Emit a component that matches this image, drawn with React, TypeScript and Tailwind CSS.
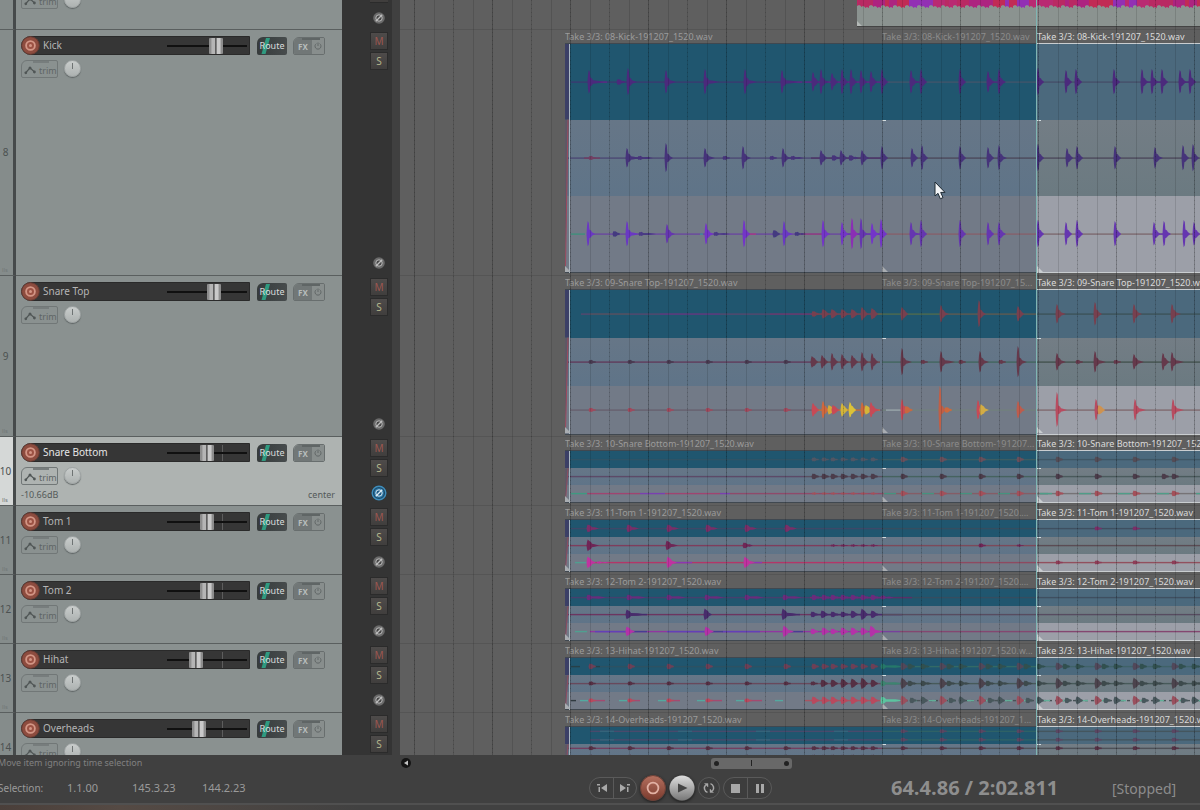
import React from "react";
import clsx from "clsx";

type Hit = [x: number, height: number, tail: number, color?: string];
type Line = [from: number, to: number, color: string];

interface Lane {
  color: string;
  hits: Hit[];
  lines: Line[];
  stereo?: boolean;
}

interface Track {
  id: number;
  name: string;
  laneHeight: number;
  volume: number;
  zeroTick?: boolean;
  selected?: boolean;
  rowClass: string;
  file: string;
  shortFile: string;
  lanes: Lane[];
}

const CLIP_STARTS = [565, 882, 1037];
const BEATS = [590, 629, 668, 707, 746, 785];
const ROLL = [813, 823, 832, 842, 852, 862, 872];
const MID = [902, 941, 980, 1018];
const END = [1057, 1096, 1134, 1173];

const same = (xs: number[], h: number, tail: number, color?: string): Hit[] =>
  xs.map((x) => [x, h, tail, color]);

const dashes = (from: number, to: number, step: number, len: number, color: string): Line[] => {
  const out: Line[] = [];
  for (let x = from; x < to; x += step) out.push([x, x + len, color]);
  return out;
};

const kickLanes: Lane[] = [
  {
    color: "#4b2a7c",
    lines: [[571, 882, "#3a3a70"], [589, 607, "#5c2c86"], [782, 802, "#5c2c86"], [805, 890, "#5c2c86"], [882, 1037, "#41556b"], [1037, 1200, "#46506a"], [911, 925, "#4b2a7c"], [988, 1001, "#4b2a7c"], [1142, 1164, "#4b2a7c"], [1180, 1192, "#4b2a7c"]],
    hits: [
      [589, 12, 14], [618, 3, 8], [628, 14, 9], [666, 12, 10], [705, 13, 14], [745, 13, 12], [782, 12, 16],
      [813, 10, 5], [821, 13, 8], [832, 9, 6], [842, 13, 6], [851, 13, 6], [861, 12, 6], [871, 11, 6], [882, 13, 6],
      [911, 12, 8], [921, 13, 5], [960, 13, 6], [988, 11, 5], [999, 13, 7], [1038, 14, 5], [1066, 12, 6], [1076, 13, 5],
      [1114, 13, 5], [1142, 13, 6], [1152, 13, 6], [1162, 13, 6], [1180, 12, 6], [1190, 13, 6],
    ],
  },
  {
    color: "#46347a",
    lines: [[565, 882, "#4c4a74"], [584, 600, "#733f62"], [629, 650, "#46347a"], [783, 800, "#46347a"], [811, 882, "#4e3566"], [882, 1200, "#4d4a5c"]],
    hits: [
      [590, 2, 6, "#733f62"], [627, 10, 12], [639, 2, 14], [666, 15, 7], [705, 10, 10], [724, 2, 6], [743, 12, 8], [771, 2, 5],
      [783, 10, 7], [792, 2, 12], [821, 8, 6], [833, 3, 5], [841, 8, 5], [850, 3, 9], [862, 8, 7], [882, 12, 5],
      [912, 10, 5], [922, 13, 6], [960, 12, 6], [988, 11, 5], [999, 13, 8], [1038, 14, 5], [1067, 10, 5], [1077, 12, 5],
      [1115, 12, 6], [1155, 11, 8], [1183, 13, 5], [1193, 14, 6],
    ],
  },
  {
    color: "#6536b0",
    lines: [[571, 585, "#3f8f7c"], [587, 882, "#6a48a0"], [640, 648, "#3f3a72"], [700, 703, "#3f8f9c"], [745, 756, "#a83a86"], [800, 824, "#93407c"], [840, 882, "#6536b0"], [882, 1037, "#86606c"], [1037, 1200, "#7d6a70"], [911, 925, "#6536b0"], [1154, 1166, "#6536b0"]],
    hits: [
      [588, 13, 7, "#6a38c4"], [614, 3, 6, "#443a80"], [627, 13, 12, "#6a38c4"], [640, 2, 16, "#4a3a86"], [667, 10, 8], [706, 11, 8, "#7335c8"],
      [715, 2, 15, "#4a3a86"], [744, 14, 6, "#7335c8"], [774, 4, 3, "#443a80"], [784, 13, 9, "#6a38c4"], [796, 2, 10, "#443a80"], [823, 14, 7, "#7335c8"], [842, 12, 5, "#7335c8"],
      [852, 16, 6, "#8a2fb4"], [861, 16, 6], [872, 11, 7, "#7335c8"], [881, 15, 4, "#7335c8"], [911, 12, 8], [921, 14, 5],
      [960, 14, 6], [988, 12, 5], [999, 12, 7], [1038, 14, 5], [1066, 12, 6], [1077, 14, 6], [1115, 13, 5],
      [1154, 12, 6], [1164, 13, 7], [1184, 14, 6], [1194, 12, 6],
    ],
  },
];

const snareTopLanes: Lane[] = [
  {
    color: "#77404f",
    lines: [[581, 882, "#56486e"], [590, 630, "#4d5560"], [660, 720, "#573c80"], [770, 815, "#643c70"], [813, 882, "#6a4a52"], [872, 940, "#4f6a4e"], [940, 1037, "#5f5a50"], [1037, 1200, "#3d545a"]],
    hits: [[813, 3, 5], [823, 5, 5], [832, 5, 5], [842, 5, 5], [852, 5, 5], [862, 7, 4], [872, 6, 5], [902, 7, 6], [941, 9, 8], [979, 14, 7], [1018, 8, 5], [1057, 10, 9], [1095, 12, 7], [1134, 10, 8], [1172, 10, 9]],
  },
  {
    color: "#65394b",
    lines: [[565, 813, "#603c5c"], [813, 880, "#6b4648"], [882, 1037, "#43665f"], [1037, 1200, "#44534f"]],
    hits: [...same(BEATS, 2, 5, "#483a50"), [812, 6, 5], [822, 7, 6], [832, 9, 5], [842, 8, 7], [852, 7, 3], [862, 10, 4], [872, 9, 5], [902, 14, 10], [922, 2, 3], [941, 11, 14], [960, 2, 6], [980, 11, 9], [1000, 2, 4], [1018, 16, 9], [1057, 9, 9], [1077, 2, 5], [1095, 11, 11], [1115, 2, 6], [1134, 8, 10], [1163, 9, 5], [1172, 10, 12]],
  },
  {
    color: "#c74a56",
    lines: [[569, 882, "#68606f"], [813, 880, "#c9743f"], [882, 1037, "#72807e"], [886, 902, "#9aa5ac"], [1037, 1200, "#806b70"]],
    hits: [
      ...same(BEATS, 2, 5, "#a0495c"), [813, 7, 5], [823, 9, 5, "#d0683e"], [829, 5, 4, "#d3a83a"], [833, 5, 4], [842, 7, 4, "#d3b53a"], [850, 8, 4, "#dcc238"],
      [862, 8, 3, "#cc6a3e"], [866, 5, 5, "#d3b53a"], [871, 8, 9], [902, 11, 5], [906, 4, 7, "#c96840"], [940, 24, 7, "#c15f46"], [946, 3, 6, "#cc6a3e"], [978, 10, 4],
      [981, 6, 8, "#d3ac45"], [1018, 9, 7, "#bd5c4d"], [1057, 18, 10, "#b84c60"], [1096, 11, 3, "#b84c60"], [1099, 5, 6, "#ce9250"], [1135, 11, 11, "#b84c60"], [1173, 11, 11, "#b84c60"],
    ],
  },
];

const snareBottomLanes: Lane[] = [
  { color: "#5b5260", lines: [[571, 882, "#2f5366"], [882, 1037, "#3c5c62"], [1037, 1200, "#3f5766"]], hits: [...same(ROLL, 2, 4, "#505664"), ...same(MID, 3, 5, "#68505c"), ...same(END, 3, 5, "#534c56")] },
  { color: "#4b3c4a", lines: [[565, 805, "#5c4a68"], [805, 882, "#5a5060"], [882, 1037, "#46635f"], [1037, 1200, "#4a5a5c"]], hits: [...same(ROLL, 3, 4), ...same(MID, 3, 5), ...same([...END, 1163], 3, 5)] },
  {
    color: "#a3505a",
    lines: [[571, 587, "#3e9a80"], [587, 640, "#a04470"], [640, 665, "#7a40b0"], [665, 720, "#a04470"], [720, 730, "#7a40b0"], [730, 882, "#8f4a6a"], [882, 1037, "#855d66"], ...dashes(884, 1037, 38, 12, "#45937f"), [1037, 1200, "#767376"], ...dashes(1040, 1200, 39, 12, "#4f9d88")],
    hits: [...same(ROLL, 1, 3), ...same(MID, 3, 6), ...same(END, 3, 7)],
  },
];

const tomOneLanes: Lane[] = [
  { color: "#7a2f68", lines: [[571, 882, "#3d4868"], [882, 1037, "#354d60"], [1037, 1200, "#3f4f60"]], hits: [...same([588, 628, 668, 707, 746, 786], 4, 11), [1096, 2, 4], [1134, 2, 4]] },
  { color: "#6f2656", lines: [[565, 882, "#7e3d5c"], [882, 1037, "#7c4a5a"], [1037, 1200, "#5b4c54"]], hits: [[588, 6, 11], [667, 5, 11], [744, 3, 9], ...same([832, 842, 852, 862, 872], 1, 3), [980, 2, 4], [1018, 1, 4]] },
  { color: "#c033a0", lines: [[575, 587, "#4f9f90"], [587, 882, "#b33668"], [672, 692, "#8a38b4"], [750, 762, "#8a38b4"], [882, 1037, "#8e4a60"], [1037, 1200, "#92505e"]], hits: [[588, 6, 8], [598, 1, 12], [668, 6, 9], [745, 6, 10], ...same(END, 2, 5, "#8e3e58")] },
];

const tomTwoLanes: Lane[] = [
  { color: "#6a2c7c", lines: [[571, 882, "#45406e"], [810, 882, "#742a70"], [882, 1037, "#354d60"], [882, 912, "#5a3068"], [1037, 1200, "#3f4f60"]], hits: [...same([588, 628, 668, 706, 746, 784], 3, 18), ...same(ROLL, 3, 8), [882, 2, 12]] },
  { color: "#482c6c", lines: [[565, 882, "#6c3560"], [628, 647, "#482c6c"], [783, 800, "#482c6c"], [811, 902, "#482c6c"], [882, 1200, "#574c60"]], hits: [[627, 5, 18], [705, 6, 7], [783, 6, 16], [812, 3, 4], [822, 4, 6], [832, 3, 7], [842, 3, 7], [852, 4, 5], [862, 6, 5], [872, 4, 7]] },
  { color: "#b432a8", lines: [[575, 587, "#4f9f90"], [590, 882, "#9036a0"], [595, 627, "#6240b8"], [667, 705, "#6240b8"], [722, 760, "#6240b8"], [632, 647, "#483c94"], [711, 723, "#483c94"], [787, 803, "#483c94"], [882, 900, "#77419c"], [900, 1200, "#844770"]], hits: [[627, 5, 8], [706, 5, 8], [784, 6, 10], [812, 3, 4], [823, 4, 5], [832, 3, 5], [842, 4, 5], [852, 4, 6], [862, 4, 5], [871, 6, 11]] },
];

const hatBase = [...MID, ...END];
const hatOff = [922, 960, 999, 1038, 1077, 1115, 1154, 1193];

const hihatLanes: Lane[] = [
  { color: "#6d4056", lines: [[571, 580, "#284048"], [590, 600, "#284048"], [600, 882, "#2d5162"], [882, 1037, "#336a66"], [1037, 1200, "#3f6268"]], hits: [...same(BEATS, 3, 4), ...same(ROLL, 3, 5), [882, 3, 22, "#25786a"], ...same(hatBase, 4, 6, "#51485a"), ...same(hatBase.map((x) => x + 7), 3, 6, "#31504f"), ...same(hatOff, 3, 8, "#31504f")] },
  { color: "#553044", lines: [[565, 882, "#68495c"], [882, 1200, "#475a5a"]], hits: [...same(BEATS, 2, 4), [812, 2, 5], [822, 4, 6], [832, 4, 6], [842, 5, 5], [852, 5, 6], [862, 6, 5], [872, 4, 5], [882, 3, 22, "#3d8470"], ...same(hatBase, 6, 8, "#4c434d"), ...same(hatBase.map((x) => x + 7), 3, 8, "#3d4a4c"), ...same(hatOff, 3, 10, "#3d4a4c")] },
  { color: "#b8495e", lines: [[571, 576, "#303a40"], ...dashes(580, 790, 39, 8, "#54a9a0"), [590, 605, "#a34a70"], [630, 640, "#a34a70"], [668, 680, "#a34a70"], [707, 722, "#a34a70"], [746, 762, "#a34a70"], [805, 882, "#a85460"], ...dashes(905, 1200, 6, 3, "#485357"), ...dashes(910, 1200, 19, 7, "#62ae98")], hits: [...same([590, 629, 668, 707, 746], 2, 6), ...same(ROLL, 4, 6), [882, 4, 22, "#5cc4a0"], ...same(hatBase, 5, 5, "#99505e"), ...same(hatBase.map((x) => x + 9), 3, 6, "#48575c"), ...same(hatOff, 4, 5, "#48575c")] },
];

const overheadLanes: Lane[] = [
  { color: "#5b4662", stereo: true, lines: [[590, 882, "#4a4a6c"], ...dashes(600, 880, 78, 14, "#35647a"), [882, 1037, "#2f6266"], [1037, 1200, "#44565e"]], hits: [...same([...MID, ...END], 2, 5)] },
  { color: "#553044", stereo: true, lines: [[565, 882, "#723f60"], [882, 1200, "#4d5158"]], hits: [...same([...BEATS, ...ROLL, ...MID, ...END], 2, 5)] },
  { color: "#553044", stereo: true, lines: [[565, 1200, "#723f60"]], hits: [] },
];

const TRACKS: Track[] = [
  { id: 8, name: "Kick", laneHeight: 76, volume: 64, rowClass: "h-[246px]", file: "08-Kick-191207_1520.wav", shortFile: "08-Kick-191207_1520.wav", lanes: kickLanes },
  { id: 9, name: "Snare Top", laneHeight: 48, volume: 61, rowClass: "h-[161px]", file: "09-Snare Top-191207_1520.wav", shortFile: "09-Snare Top-191207_15...", lanes: snareTopLanes },
  { id: 10, name: "Snare Bottom", laneHeight: 17, volume: 50, zeroTick: true, selected: true, rowClass: "h-[69px]", file: "10-Snare Bottom-191207_1520.wav", shortFile: "10-Snare Bottom-191207...", lanes: snareBottomLanes },
  { id: 11, name: "Tom 1", laneHeight: 17, volume: 50, zeroTick: true, rowClass: "h-[69px]", file: "11-Tom 1-191207_1520.wav", shortFile: "11-Tom 1-191207_1520....", lanes: tomOneLanes },
  { id: 12, name: "Tom 2", laneHeight: 17, volume: 50, zeroTick: true, rowClass: "h-[69px]", file: "12-Tom 2-191207_1520.wav", shortFile: "12-Tom 2-191207_1520....", lanes: tomTwoLanes },
  { id: 13, name: "Hihat", laneHeight: 17, volume: 33, zeroTick: true, rowClass: "h-[69px]", file: "13-Hihat-191207_1520.wav", shortFile: "13-Hihat-191207_1520.w...", lanes: hihatLanes },
  { id: 14, name: "Overheads", laneHeight: 17, volume: 38, zeroTick: true, rowClass: "h-[69px]", file: "14-Overheads-191207_1520.wav", shortFile: "14-Overheads-191207_1...", lanes: overheadLanes },
];

// sharp attack, then a short body that decays along the tail
function hitPath([x, h, tail]: Hit) {
  const body = h > 6 ? 3.5 : h * 0.6;
  const top = [
    [x - 1.5, 0], [x - 1, h * 0.6], [x - 0.3, h], [x + 0.8, h * 0.85], [x + 1.4, body + 1],
    [x + 3, body], [x + 4, body * 0.5], [x + Math.max(5, tail * 0.6), h > 2 ? 1.3 : h * 0.5], [x + Math.max(6, tail), 0],
  ];
  const bottom = [...top].reverse().map(([px, py]) => [px, -py * 0.95]);
  return "M" + [...top, ...bottom].map(([px, py]) => `${px} ${-py}`).join("L") + "Z";
}

function Wave({ lane, start }: { lane: Lane; start: number }) {
  const rows = lane.stereo ? [25, 75] : [50];
  return (
    <svg className="block h-full w-full" aria-hidden="true">
      {rows.map((row) => (
        <svg key={row} y={`${row}%`} className="overflow-visible">
          <g transform={`translate(${-start} 0)`}>
            {lane.lines.map(([from, to, color], i) => (
              <rect key={i} x={from} y={-0.6} width={to - from} height={1.4} fill={color} />
            ))}
            {lane.hits.map((hit, i) => (
              <path key={i} d={hitPath(hit)} fill={hit[3] ?? lane.color} />
            ))}
          </g>
        </svg>
      ))}
    </svg>
  );
}

const LANE_BG = [
  ["bg-[#20566f]", "bg-linear-to-b from-[#667687] to-[#5f7488]", "bg-[#727a87]"],
  ["bg-[#20566f]", "bg-linear-to-b from-[#667687] to-[#5f7488]", "bg-[#727a87]"],
  ["bg-[#4b697d]", "bg-linear-to-b from-[#737d85] to-[#6b7a81]", "bg-[#9c9fa8]"],
];

function Clip({ track, index }: { track: Track; index: number }) {
  const start = CLIP_STARTS[index];
  const active = index === 2;
  return (
    <div
      className={clsx(
        "relative flex min-w-0 flex-col",
        index === 0 && "w-[317px] shrink-0",
        index === 1 && "w-[155px] shrink-0",
        active && "flex-1",
      )}
    >
      <p
        className={clsx(
          "h-[13px] overflow-hidden text-[9px] leading-[13px] whitespace-nowrap",
          index === 0 && "text-[#9b9b9b]",
          index === 1 && "text-[#8c8c8c]",
          active && "text-[#dadada]",
        )}
      >
        Take 3/3: {index === 1 ? track.shortFile : track.file}
      </p>
      <div className={clsx("border-y", active ? "border-[#c9cdd0]" : "border-[#404850]")}>
        {track.lanes.map((lane, i) => (
          <div key={i} className={LANE_BG[index][i]} style={{ height: track.laneHeight }}>
            <Wave lane={lane} start={start} />
          </div>
        ))}
      </div>
      {index === 0 && (
        <div className="absolute top-3.5 bottom-0.5 left-0 w-[5px] border-r border-[#aab8c1]">
          <svg className="block h-full w-full" viewBox="0 0 4 100" preserveAspectRatio="none" aria-hidden="true">
            <rect width="4" height="33" fill="#3b3f66" />
            <path d="M0 33H4L0 100Z" fill="#5d5866" />
            <path d="M3 33L0.5 97" stroke="#9c4a5e" fill="none" />
          </svg>
        </div>
      )}
      {index > 0 && (
        <div className="absolute left-0 h-px w-1 bg-[#d4dde0]" style={{ top: track.laneHeight + 14 }} />
      )}
      <svg className="absolute bottom-[3px] left-0 h-1.5 w-1.5" viewBox="0 0 6 6" aria-hidden="true">
        <path d="M0 0L6 6H0Z" fill={active ? "#c9cdd0" : "#a9adb2"} />
      </svg>
    </div>
  );
}

function Envelope() {
  return (
    <button className="relative flex h-[18px] w-[37px] shrink-0 items-center gap-[3px] rounded-[2px] rounded-tl-md border border-[#717777] pt-0.5 pl-0.5 text-[9px] leading-none text-[#5f6565]">
      <svg className="h-2.5 w-3 shrink-0" viewBox="0 0 12 10" fill="none" stroke="#505656" aria-hidden="true">
        <path d="M1.5 8L6 2.8L10.5 7" strokeWidth="1.2" />
        <circle cx="1.8" cy="7.8" r="1.4" fill="#505656" stroke="none" />
        <circle cx="6" cy="3" r="1.5" fill="#505656" stroke="none" />
        <circle cx="10.4" cy="7" r="1.4" fill="#505656" stroke="none" />
      </svg>
      trim
      <span className="absolute top-0 left-[11px] h-0.5 w-4 bg-[#777d7d]" />
    </button>
  );
}

function PanKnob() {
  return (
    <button aria-label="Pan" className="flex h-[17px] w-[17px] shrink-0 justify-center rounded-full border border-[#9fa4a4] bg-linear-to-b from-[#c9cdcc] to-[#adb2b1] pt-0.5 shadow-[0_1px_1px_#5f6565]">
      <span className="h-1.5 w-px bg-[#6e7373]" />
    </button>
  );
}

function PhaseButton({ active }: { active?: boolean }) {
  const ink = active ? "#dcebf4" : "#bdbdbd";
  return (
    <button aria-label="Invert phase" className="flex h-4 w-4 items-center justify-center">
      <svg className="h-4 w-4" viewBox="0 0 16 16" fill="none" aria-hidden="true">
        {active && <circle cx="8" cy="8" r="6.8" fill="#1c4a69" stroke="#3f8dbb" strokeWidth="1.4" />}
        <circle cx="8" cy="8" r={active ? 4.8 : 5.8} fill={active ? "#2d7bab" : "#6b6b6b"} />
        <circle cx="8" cy="8" r="3.2" fill={active ? "#1f5c86" : "#484848"} stroke={ink} strokeWidth="1" />
        <path d="M4.800 11.200L11.200 4.800" stroke={ink} strokeWidth="1.3" />
      </svg>
    </button>
  );
}

function MuteSolo() {
  const base = "h-[18px] w-[18px] border border-[#2b2b2b] bg-linear-to-b from-[#4e4b4a] to-[#403e3d] text-[10px] leading-none";
  return (
    <div className="flex flex-col gap-0.5">
      <button className={clsx(base, "text-[#9d5750]")}>M</button>
      <button className={clsx(base, "text-[#b3b68c]")}>S</button>
    </div>
  );
}

function TrackRow({ track }: { track: Track }) {
  return (
    <div className={clsx("flex shrink-0", track.rowClass)}>
      <div
        className={clsx(
          "relative flex w-4 shrink-0 items-center justify-center border-r-3 border-b border-r-[#464a4b] border-b-[#5a5f5f] pr-0.5 text-[10px] text-[#4c5151]",
          track.selected ? "bg-[#d5d8d7]" : "bg-[#858c8b]",
        )}
      >
        {track.id}
        <span className="absolute bottom-0.5 left-0.5 text-[6px] leading-none text-[#717777]">lls</span>
      </div>
      <div
        className={clsx(
          "flex min-w-0 flex-1 flex-col border-b border-[#5a5f5f] pt-1.5 pl-[5px]",
          track.selected ? "bg-[#aeb3b1]" : "bg-[#8a9190]",
        )}
      >
        <div className="flex items-center">
          <div className="flex h-[19px] w-[229px] items-center rounded-l-full border border-[#2a2a2a] bg-[#363636]">
            <button aria-label="Record arm" className="-ml-px shrink-0">
              <svg className="block h-[19px] w-[19px]" viewBox="0 0 19 19" fill="none" aria-hidden="true">
                <circle cx="9.5" cy="9.5" r="8.8" fill="#8d4c3f" stroke="#6b3d34" />
                <circle cx="9.5" cy="9.5" r="4.4" fill="#9c5244" stroke="#d39686" strokeWidth="1.8" />
                <circle cx="9.5" cy="9.5" r="1.5" fill="#d39686" />
              </svg>
            </button>
            <span className={clsx("flex-1 pl-[3px] text-[10px]", track.selected ? "text-[#e6e6e6]" : "text-[#b5b5b5]")}>
              {track.name}
            </span>
            <div className="relative mr-[2px] flex w-20 items-center">
              {track.zeroTick && <span className="absolute left-[55px] h-4 w-px bg-[#5d5d5d]" />}
              <input
                type="range"
                aria-label={`${track.name} volume`}
                defaultValue={track.volume}
                className="relative h-4 w-20 appearance-none bg-transparent [&::-webkit-slider-runnable-track]:h-0.5 [&::-webkit-slider-runnable-track]:bg-[#101010] [&::-webkit-slider-thumb]:-mt-[7px] [&::-webkit-slider-thumb]:h-4 [&::-webkit-slider-thumb]:w-3.5 [&::-webkit-slider-thumb]:appearance-none [&::-webkit-slider-thumb]:rounded-[1px] [&::-webkit-slider-thumb]:bg-[linear-gradient(90deg,#8d8d8d_0_15%,#b5b5b5_20%_42%,#5e5e5e_45%_52%,#c9c9c9_57%_80%,#8d8d8d_85%)]"
              />
            </div>
          </div>
          <button className="relative ml-[7px] h-[18px] w-[30px] overflow-hidden rounded-[2px] rounded-tl-md bg-linear-to-r from-[#363b3c] to-[#474c4d] text-[9px] leading-none text-[#d8dcdc]">
            <svg className="absolute top-0 left-0.5 h-[18px] w-3" viewBox="0 0 12 18" aria-hidden="true">
              <path d="M7 1H11L6.500 17H2.500Z" fill="#2f9a80" />
              <path d="M5 7L8 9L3 12Z" fill="#37b596" />
            </svg>
            <span className="relative">Route</span>
          </button>
          <div className="relative ml-1.5 flex h-[18px] w-8 overflow-hidden rounded-[2px] rounded-tl-md border border-[#686e6e]">
            <button className="w-[18px] bg-[#717777] pt-0.5 text-[8px] leading-none font-bold text-[#b7bcbb]">FX</button>
            <button aria-label="Bypass effects" className="flex flex-1 items-center justify-center bg-[#888e8d]">
              <svg className="h-2 w-2" viewBox="0 0 8 8" fill="none" stroke="#626868" aria-hidden="true">
                <path d="M2.400 1.600A3 3 0 1 0 5.600 1.600M4 0.500V4" />
              </svg>
            </button>
            <span className="absolute top-0 left-2 h-0.5 w-[18px] bg-[#5f6565]" />
          </div>
        </div>
        <div className="mt-[5px] flex items-start gap-1.5">
          <Envelope />
          <PanKnob />
        </div>
        {track.selected && (
          <div className="flex justify-between pr-[7px] text-[9px] leading-[19px] text-[#545a59]">
            <span>-10.66dB</span>
            <span>center</span>
          </div>
        )}
      </div>
      <div className="flex w-[58px] shrink-0 flex-col items-center justify-between border-r-8 border-[#404040] bg-[#343434] pt-0.5 pb-[5px] pl-6">
        <MuteSolo />
        <PhaseButton active={track.selected} />
      </div>
    </div>
  );
}

function PreviousRow() {
  return (
    <div className="flex h-[30px] shrink-0 overflow-hidden">
      <div className="w-4 shrink-0 border-r-3 border-b border-r-[#464a4b] border-b-[#5a5f5f] bg-[#858c8b]" />
      <div className="flex min-w-0 flex-1 items-start border-b border-[#5a5f5f] bg-[#8a9190] pl-[5px]">
        <div className="-mt-[9px] flex gap-1.5">
          <Envelope />
          <PanKnob />
        </div>
      </div>
      <div className="flex w-[58px] shrink-0 flex-col items-center justify-between border-r-8 border-[#404040] bg-[#343434] pb-1 pl-6">
        <button aria-label="Solo" className="h-[3px] w-[18px] border-b border-[#2b2b2b] bg-[#403e3d]" />
        <PhaseButton />
      </div>
    </div>
  );
}

function PreviousClip() {
  const colors = ["#b92a63", "#ad2480", "#c12b55", "#9230b4", "#b92a72"];
  const columns = Array.from({ length: 180 }, (_, i) => ({
    x: i * 4,
    h: 6 + ((i * 7) % 3),
    color: colors[Math.floor(i / 5 + ((i * 5) % 3) / 3) % 5],
  }));
  return (
    <div className="flex h-[30px] shrink-0 border-b border-[#555555] pl-[457px]">
      <div className="h-[27px] flex-1 border-b border-[#444444] bg-[#8b9390]">
        <svg className="block h-full w-full" aria-hidden="true">
          {columns.map(({ x, h, color }) => (
            <path key={x} d={`M${x} 0H${x + 4}V${h}L${x + 2} ${h - 1}L${x} ${h}Z`} fill={color} />
          ))}
          <path d="M0 21L6 27H0Z" fill="#b4b9b7" />
        </svg>
      </div>
    </div>
  );
}

function GridLines() {
  return (
    <svg className="pointer-events-none absolute inset-0 h-full w-full" aria-hidden="true">
      <defs>
        <pattern id="beat" x="14" width="78" height="4" patternUnits="userSpaceOnUse">
          <path d="M0.5 0V4" stroke="#000" strokeOpacity="0.22" />
          <path d="M20.500 0V4M39.500 0V4M59.500 0V4" stroke="#000" strokeOpacity="0.12" />
          <path d="M0.5 0V1M39.500 0V1" stroke="#000" strokeOpacity="0.14" />
        </pattern>
      </defs>
      <rect width="100%" height="100%" fill="url(#beat)" />
    </svg>
  );
}

function Transport() {
  return (
    <div className="flex items-center gap-[3px]">
      <div className="flex h-[22px] overflow-hidden rounded-full border border-[#5a5a5a] bg-[#3d3d3d]">
        <button aria-label="Go to start" className="flex w-6 items-center justify-center border-r border-[#5a5a5a]">
          <svg className="h-2.5 w-3" viewBox="0 0 12 10" fill="#a8a8a8" aria-hidden="true">
            <path d="M11 1V9L5 5ZM2.500 4H4V9H2.500ZM1 1H4V2.500H1Z" />
          </svg>
        </button>
        <button aria-label="Go to end" className="flex w-[22px] items-center justify-center">
          <svg className="h-2.5 w-3" viewBox="0 0 12 10" fill="#a8a8a8" aria-hidden="true">
            <path d="M1 1V9L7 5ZM8 4H9.500V9H8ZM8 1H11V2.500H8Z" />
          </svg>
        </button>
      </div>
      <button aria-label="Record" className="rounded-full shadow-[0_1px_3px_#1c1c1c]">
        <svg className="block h-[26px] w-[26px]" viewBox="0 0 26 26" fill="none" aria-hidden="true">
          <defs>
            <linearGradient id="rec" x2="0" y2="1">
              <stop stopColor="#b5705f" />
              <stop offset="1" stopColor="#793a2d" />
            </linearGradient>
          </defs>
          <circle cx="13" cy="13" r="12.5" fill="url(#rec)" stroke="#6e4137" />
          <circle cx="13" cy="13" r="5.4" stroke="#e2b1a4" strokeWidth="1.8" />
        </svg>
      </button>
      <button aria-label="Play" className="rounded-full shadow-[0_1px_3px_#1c1c1c]">
        <svg className="block h-[26px] w-[26px]" viewBox="0 0 26 26" aria-hidden="true">
          <defs>
            <linearGradient id="play" x2="0" y2="1">
              <stop stopColor="#dedede" />
              <stop offset="1" stopColor="#777777" />
            </linearGradient>
          </defs>
          <circle cx="13" cy="13" r="12.5" fill="url(#play)" />
          <path d="M9 8.500L18.500 13L9 17.500Z" fill="#444444" />
        </svg>
      </button>
      <button aria-label="Repeat" className="flex h-[22px] w-[22px] items-center justify-center rounded-full border border-[#5a5a5a] bg-[#3d3d3d]">
        <svg className="h-3.5 w-3.5" viewBox="0 0 14 14" fill="none" stroke="#a8a8a8" strokeWidth="1.5" aria-hidden="true">
          <path d="M5.500 11.400A4.600 4.600 0 0 1 3.600 3.900M8.500 2.600A4.600 4.600 0 0 1 10.400 10.100" />
          <path d="M2.500 2.500H6V6ZM11.500 11.500H8V8Z" fill="#a8a8a8" strokeWidth="0.4" />
        </svg>
      </button>
      <div className="flex h-[22px] overflow-hidden rounded-full border border-[#5a5a5a] bg-[#3d3d3d]">
        <button aria-label="Stop" className="flex w-6 items-center justify-center border-r border-[#5a5a5a]">
          <span className="h-[9px] w-[9px] bg-[#a8a8a8]" />
        </button>
        <button aria-label="Pause" className="flex w-[23px] items-center justify-center gap-0.5">
          <span className="h-[9px] w-[3px] bg-[#a8a8a8]" />
          <span className="h-[9px] w-[3px] bg-[#a8a8a8]" />
        </button>
      </div>
    </div>
  );
}

function App() {
  return (
    <div className="relative flex h-screen flex-col overflow-hidden bg-[#404040] font-['Noto_Sans',sans-serif]">
      <main className="flex min-h-0 flex-1 overflow-hidden">
        <section aria-label="Tracks" className="flex w-[400px] shrink-0 flex-col overflow-hidden">
          <PreviousRow />
          {TRACKS.map((track) => (
            <TrackRow key={track.id} track={track} />
          ))}
        </section>
        <section aria-label="Arrangement" className="relative flex min-w-0 flex-1 flex-col overflow-hidden bg-[#5f5f5f]">
          <PreviousClip />
          {TRACKS.map((track) => (
            <div key={track.id} className={clsx("flex shrink-0 border-b border-[#555555] pl-[165px]", track.rowClass)}>
              <Clip track={track} index={0} />
              <Clip track={track} index={1} />
              <Clip track={track} index={2} />
            </div>
          ))}
          <GridLines />
          <div className="absolute inset-y-0 left-[636px] w-px bg-[#7fb5b3]" />
        </section>
      </main>

      <footer className="flex h-[55px] shrink-0 flex-col">
        <div className="flex h-4 items-center text-[9px] text-[#808080]">
          <p className="-ml-0.5 w-[402px]">Move item ignoring time selection</p>
          <button aria-label="Scroll left" className="h-3 w-3">
            <svg className="block h-3 w-3" viewBox="0 0 12 12" aria-hidden="true">
              <circle cx="6" cy="6" r="5" fill="#141414" />
              <path d="M8 3.500V8.500L4 6Z" fill="#c4c4c4" />
            </svg>
          </button>
          <div className="ml-[299px] flex h-[11px] w-[81px] items-center justify-between rounded-[3px] bg-[#686868] px-[3px]">
            <span className="h-[5px] w-[5px] rounded-full bg-[#222222]" />
            <span className="h-1.5 w-px bg-[#222222]" />
            <span className="h-[5px] w-[5px] rounded-full bg-[#222222]" />
          </div>
        </div>
        <div className="flex h-8 items-center pt-0.5 text-[11px] text-[#9a9a9a]">
          <p className="-ml-0.5 w-[69px] shrink-0 text-[10px]">Selection:</p>
          <p className="w-[65px] shrink-0">1.1.00</p>
          <p className="w-[70px] shrink-0">145.3.23</p>
          <p className="w-[387px] shrink-0">144.2.23</p>
          <Transport />
          <p className="ml-[119px] w-[221px] shrink-0 font-['Open_Sans',sans-serif] text-[20px] font-bold text-[#8e8e8e]">64.4.86 / 2:02.811</p>
          <p className="text-[14px] text-[#8c8c8c]">[Stopped]</p>
        </div>
        <div className="flex-1 border-t-2 border-[#505050] bg-linear-to-r from-[#4a3f3a] via-[#554a44] via-10% to-[#414141] to-30%" />
      </footer>

      <svg className="pointer-events-none absolute top-[181px] left-[934px] h-5 w-3" viewBox="0 0 12 20" aria-hidden="true">
        <path d="M1 1V15L4 12.300L6.300 17.800L9 16.600L6.700 11.400H11Z" fill="#f2f4f6" stroke="#1e2a33" />
      </svg>
    </div>
  );
}

export default App;
